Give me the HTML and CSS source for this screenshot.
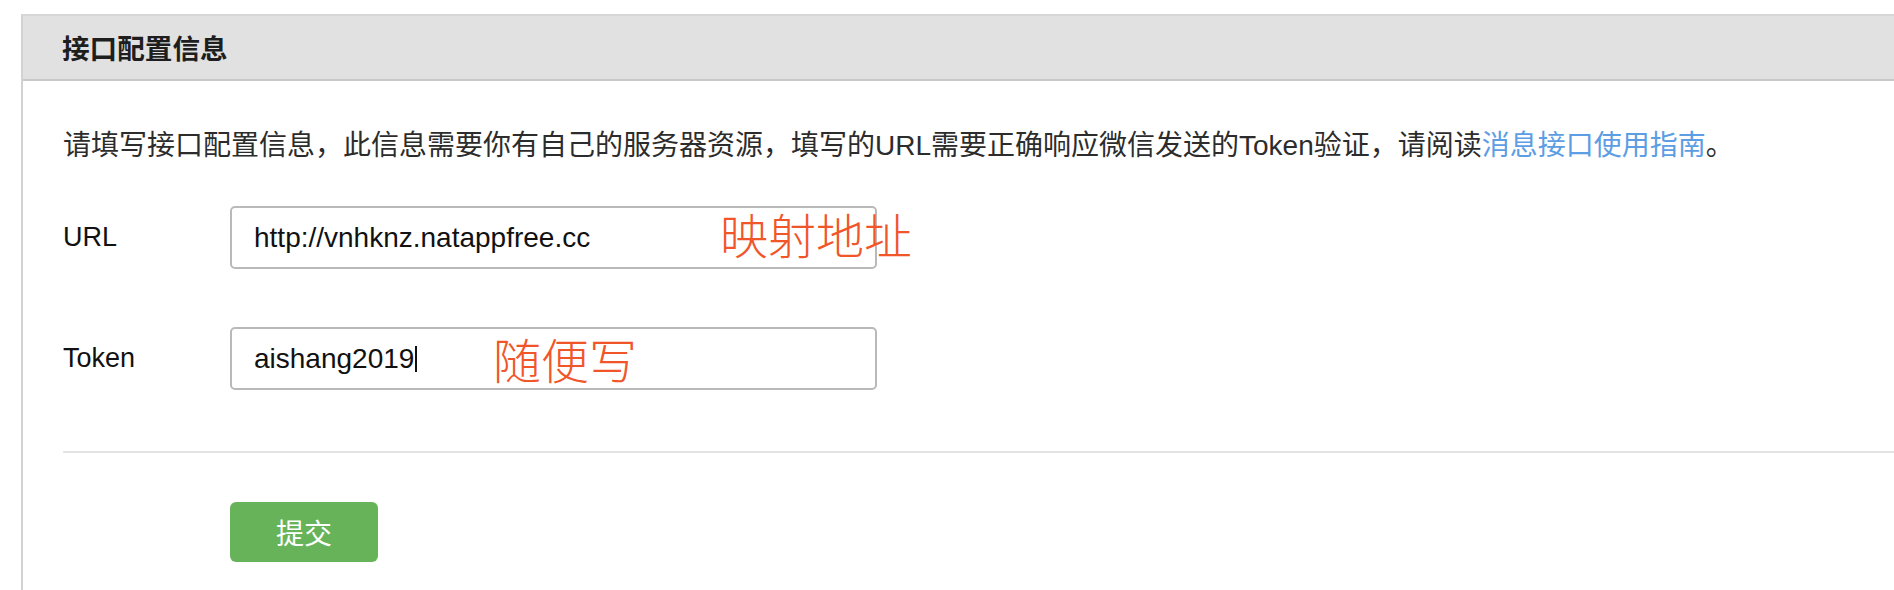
FILE: index.html
```html
<!DOCTYPE html>
<html lang="zh-CN">
<head>
<meta charset="utf-8">
<title>接口配置信息</title>
<link rel="stylesheet" href="styles.css">
</head>
<body>
<div class="panel">
  <div class="panel-header">接口配置信息</div>
  <div class="panel-body">
    <p class="desc">请填写接口配置信息，此信息需要你有自己的服务器资源，填写的URL需要正确响应微信发送的Token验证，请阅读<a class="link" href="#">消息接口使用指南</a>。</p>
    <div class="row row-url">
      <div class="label">URL</div>
      <div class="field"><span class="value">http://vnhknz.natappfree.cc</span></div>
      <div class="note note-url">映射地址</div>
    </div>
    <div class="row row-token">
      <div class="label">Token</div>
      <div class="field"><span class="value">aishang2019</span><span class="caret"></span></div>
      <div class="note note-token">随便写</div>
    </div>
    <div class="divider"></div>
    <div class="actions">
      <button class="btn-submit" type="button">提交</button>
    </div>
  </div>
</div>
</body>
</html>
```
FILE: styles.css
```css
html, body {
  margin: 0;
  padding: 0;
  background: #ffffff;
  overflow: hidden;
}
body {
  font-family: "Liberation Sans", "Noto Sans CJK SC", sans-serif;
  color: #333333;
}
.panel {
  margin: 14px 0 0 21px;
  height: calc(100vh - 14px);
  border-left: 2px solid #d2d2d2;
  border-top: 2px solid #d6d6d6;
  box-sizing: border-box;
}
.panel-header {
  height: 63px;
  line-height: 63px;
  background: #e1e1e1;
  border-bottom: 2px solid #c8c8c8;
  padding-left: 39px;
  font-family: "Noto Sans CJK SC", sans-serif;
  font-size: 27.6px;
  font-weight: 700;
  color: #1e1e1e;
}
.panel-body {
  padding-left: 40px;
}
.desc {
  margin: 0;
  padding-top: 45px;
  font-size: 28px;
  line-height: 40px;
  color: #2c2c2c;
  font-family: "Liberation Sans", "Noto Sans CJK SC", sans-serif;
}
.link {
  color: #5c9de3;
  text-decoration: none;
}
.row {
  position: relative;
  display: flex;
  align-items: center;
}
.row-url {
  margin-top: 40px;
}
.row-token {
  margin-top: 58px;
}
.label {
  width: 167px;
  font-size: 27px;
  color: #111111;
}
.field {
  width: 647px;
  height: 63px;
  box-sizing: border-box;
  border: 2px solid #b9b9b9;
  border-radius: 5px;
  padding-left: 22px;
  display: flex;
  align-items: center;
  font-size: 28px;
  color: #111111;
  background: #ffffff;
}
.caret {
  display: inline-block;
  width: 2px;
  height: 26px;
  margin-left: 1px;
  background: #111111;
}
.note {
  position: absolute;
  font-family: "Noto Sans CJK SC", sans-serif;
  font-weight: 300;
  font-size: 48px;
  line-height: 48px;
  color: #f0562a;
  white-space: nowrap;
}
.note-url {
  left: 657px;
  top: 3px;
}
.note-token {
  left: 430px;
  top: 7px;
}
.divider {
  margin-top: 61px;
  height: 2px;
  background: #e4e4e4;
}
.actions {
  padding-left: 167px;
  padding-top: 49px;
}
.btn-submit {
  width: 148px;
  height: 60px;
  border: none;
  border-radius: 6px;
  background: #66b35a;
  color: #ffffff;
  font-family: "Noto Sans CJK SC", sans-serif;
  font-size: 28px;
  font-weight: 400;
  padding: 0;
}
```
